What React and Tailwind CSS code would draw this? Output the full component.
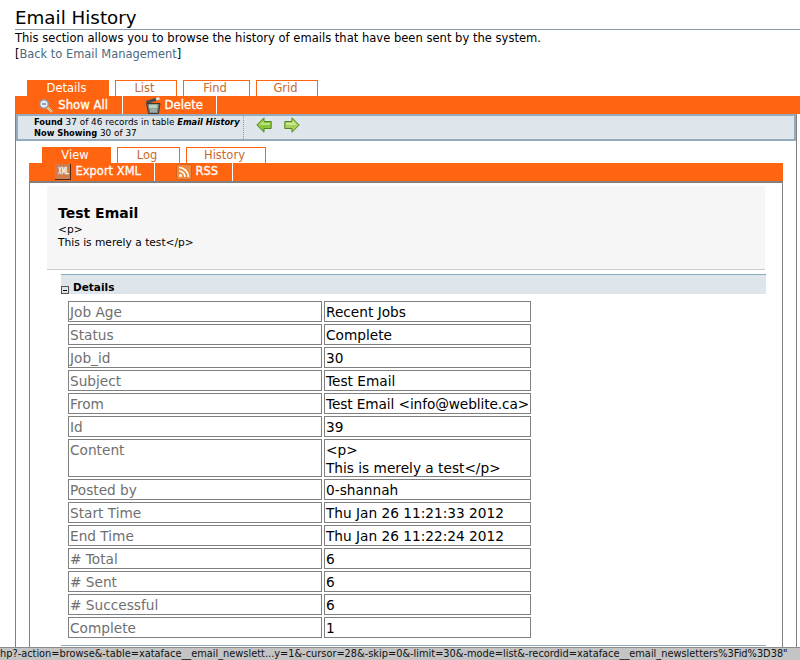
const rows = [
  ["Job Age", "Recent Jobs"],
  ["Status", "Complete"],
  ["Job_id", "30"],
  ["Subject", "Test Email"],
  ["From", "Test Email <info@weblite.ca>"],
  ["Id", "39"],
  ["Content", "<p>\nThis is merely a test</p>", true],
  ["Posted by", "0-shannah"],
  ["Start Time", "Thu Jan 26 11:21:33 2012"],
  ["End Time", "Thu Jan 26 11:22:24 2012"],
  ["# Total", "6"],
  ["# Sent", "6"],
  ["# Successful", "6"],
  ["Complete", "1"],
];

function Tab({ active, w, ml, children }) {
  return (
    <div
      className={
        active
          ? "h-[16px] flex items-end justify-center pr-[3px] bg-[#ff6410] text-white text-[11.5px] leading-[16px]"
          : "h-[16px] flex items-end justify-center pr-[3px] bg-white border border-b-0 border-[#ff6410] text-[#c8692c] text-[11.5px] leading-[15px]"
      }
      style={{ width: w, marginLeft: ml }}
    >
      {children}
    </div>
  );
}

function ZoomOut() {
  return (
    <svg width="14" height="14" viewBox="0 0 14 14">
      <line x1="7" y1="7" x2="13" y2="13" stroke="#f0d9b0" strokeWidth="2.4" />
      <line x1="7" y1="7" x2="13" y2="13" stroke="#a58a5a" strokeWidth="0.6" />
      <circle cx="5" cy="5" r="4.2" fill="#e6eefa" stroke="#8b9ab4" strokeWidth="1.2" />
      <line x1="3" y1="5" x2="7" y2="5" stroke="#5a6a8a" strokeWidth="1.2" />
    </svg>
  );
}
function Trash() {
  return (
    <svg width="16" height="17" viewBox="0 0 16 17">
      <path d="M1 4L11 0.5l1.5 3L2 7z" fill="#4a4a4a" />
      <path d="M10.5 1l3.5-1 1 2.5-3.5 1z" fill="#e4e4e4" />
      <path d="M1.5 6.5h13.5L13.5 16.5h-10z" fill="#6f7874" stroke="#2a2a2a" strokeWidth="0.8" />
      <path d="M4 7.5h8.5v4H4z" fill="#b8d0bc" />
      <path d="M5 12h7v3.5H5z" fill="#a0aaa4" />
    </svg>
  );
}
function Arrow({ right }) {
  return (
    <svg width="16" height="16" viewBox="0 0 16 16" style={right ? { transform: "scaleX(-1)" } : undefined}>
      <path d="M0.8 8L8 0.8V4.5H15.2V11.5H8V15.2z" fill={right ? "#a6d05a" : "#8ac63c"} stroke="#4f8a1a" strokeWidth="1" />
      <path d="M3 8L7.5 3.5V6H14V8z" fill={right ? "#cbe694" : "#bde07c"} />
    </svg>
  );
}
function Xml() {
  return (
    <div className="w-[16px] h-[16px] bg-[#cf7d4c] border-r border-b border-[#4a2a14] text-white text-[8px] leading-[15px] text-center overflow-hidden">
      <span className="inline-block scale-x-[0.6] origin-center">XML</span>
    </div>
  );
}
function Rss() {
  return (
    <svg width="16" height="16" viewBox="0 0 16 16">
      <rect x="0.5" y="0.5" width="15" height="15" rx="2" fill="#f08a3a" stroke="#d9601a" />
      <circle cx="4.5" cy="11.5" r="1.6" fill="#fff" />
      <path d="M3 7a6 6 0 0 1 6 6M3 3.5a9.5 9.5 0 0 1 9.5 9.5" stroke="#fff" strokeWidth="1.7" fill="none" />
    </svg>
  );
}

export default function App() {
  return (
    <div className="relative w-[800px] h-[660px] overflow-hidden bg-white font-['DejaVu_Sans',sans-serif] text-black">
      <div className="pt-[8px] pl-[15px]">
        <h1 className="text-[18.3px] leading-[20px] h-[22px] border-b border-[#8a9aa6]">Email History</h1>
        <p className="text-[11.55px] leading-[15px] mt-[1px]">This section allows you to browse the history of emails that have been sent by the system.</p>
        <p className="text-[11.45px] leading-[15px] mt-[1px] text-[#4c6a80]"><span className="text-black">[</span>Back to Email Management<span className="text-black">]</span></p>
      </div>
      <div className="flex h-[16px] mt-[18px] pl-[27px]">
        <Tab active w={82} ml={0}>Details</Tab>
        <Tab w={62} ml={6}>List</Tab>
        <Tab w={67} ml={6}>Find</Tab>
        <Tab w={62} ml={6}>Grid</Tab>
      </div>
      <div className="ml-[15px] h-[18px] bg-[#ff6410] flex text-white text-[11.7px] [-webkit-text-stroke:0.3px_white]">
        <div className="w-[108px] border-r border-white flex items-center justify-end pt-[1px] pr-[14px] gap-[5px]"><ZoomOut />Show All</div>
        <div className="w-[94px] border-r border-white flex items-center justify-end pt-[1px] pr-[13px] gap-[4px]"><Trash />Delete</div>
      </div>
      <div className="ml-[15px] mr-[3px] border-x border-[#808080] h-[600px]">
        <div className="h-[27px] bg-[#dee6ec] border-2 border-[#95abbb] flex">
          <div className="w-[226px] pl-[16px] text-[8.9px] leading-[11px] pt-[1px] border-r border-dotted border-[#8a9aa6] whitespace-nowrap">
            <div><b className="text-[8.3px]">Found</b> 37 of 46 records in table <b className="text-[8.3px]"><i>Email History</i></b></div>
            <div><b className="text-[8.3px]">Now Showing</b> 30 of 37</div>
          </div>
          <div className="flex gap-[12px] pl-[12px] pt-[1px]"><Arrow /><Arrow right /></div>
        </div>
        <div className="flex h-[16px] mt-[6px] pl-[26px]">
          <Tab active w={69} ml={0}>View</Tab>
          <Tab w={63} ml={6}>Log</Tab>
          <Tab w={80} ml={6}>History</Tab>
        </div>
        <div className="mx-[13px] border-x border-[#808080] h-[600px]">
          <div className="h-[20px] bg-[#ff6410] border-b-2 border-[#808080] flex text-white text-[11.5px] [-webkit-text-stroke:0.3px_white] -mx-px">
            <div className="w-[126px] border-r border-white flex items-center justify-end pr-[13px] gap-[4px]"><Xml />Export XML</div>
            <div className="w-[78px] border-r border-white flex items-center justify-end pr-[14px] gap-[3px]"><Rss />RSS</div>
          </div>
          <div className="mx-[17px] mt-[3px] h-[84px] bg-[#f6f6f6] border-b border-[#cccccc] pl-[11px] pt-[19px]">
            <div className="text-[14px] leading-[17px] font-bold">Test Email</div>
            <div className="text-[10.65px] leading-[13px] mt-[1px]">&lt;p&gt;</div>
            <div className="text-[10.65px] leading-[13px]">This is merely a test&lt;/p&gt;</div>
          </div>
          <div className="ml-[31px] mr-[16px] mt-[4px] h-[20px] bg-[#dee6ec] border-t border-[#87adbb] flex items-end">
            <span className="w-[8px] h-[8px] border border-[#555] flex items-center justify-center mr-[4px]"><span className="w-[4px] h-px bg-black"></span></span>
            <span className="text-[10.5px] leading-[14px] font-bold">Details</span>
          </div>
          <div className="ml-[38px] mt-[7px] w-[463px] grid grid-cols-[254px_209px] gap-y-[2px] text-[13.7px]">
            {rows.map(([k, v, tall]) => (
              <div key={k} className="contents">
                <div className={`${tall ? "h-[38px]" : "h-[21px]"} border border-[#808080] text-[#6f6f6f] pl-[1px] leading-[20px] whitespace-pre`}>{k}</div>
                <div className={`${tall ? "h-[38px] leading-[18px] pt-[1px]" : "h-[21px] leading-[20px]"} ${k === "From" ? "tracking-[-0.1px]" : ""} ml-[2px] border border-[#808080] pl-[1px] whitespace-pre`}>{v}</div>
              </div>
            ))}
          </div>
          <div className="ml-[31px] mr-[16px] mt-[7px] border-t border-[#95abbb]"></div>
        </div>
      </div>
      <div className="absolute left-0 right-0 bottom-0 h-[13px] bg-[#c4c4c4] border-t border-[#8c8c8c] text-[9.8px] leading-[12px] whitespace-nowrap overflow-hidden text-[#111]">hp?-action=browse&amp;-table=xataface__email_newslett...y=1&amp;-cursor=28&amp;-skip=0&amp;-limit=30&amp;-mode=list&amp;-recordid=xataface__email_newsletters%3Fid%3D38"</div>
    </div>
  );
}
